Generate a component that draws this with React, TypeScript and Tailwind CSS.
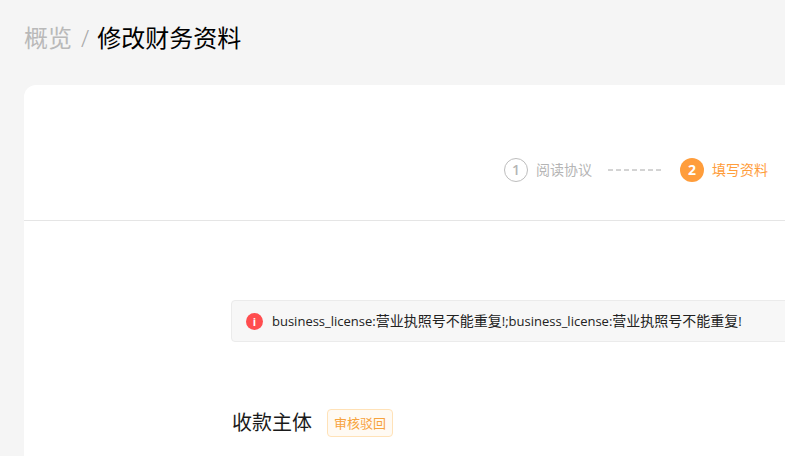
import React from "react"

const cjk = "font-['Open_Sans','Noto_Sans_CJK_SC',sans-serif]"

function ErrorText() {
  return (
    <>
      <span className="text-[13px]">business_license:</span>
      <span className="text-sm">营业执照号不能重复</span>
      <span className="text-[13px]">!</span>
    </>
  )
}

export default function App() {
  return (
    <div className={`h-screen w-full overflow-hidden bg-[#f5f5f5] pl-6 pt-[21px] ${cjk}`}>
      {/* Breadcrumb */}
      <div className="flex h-[34px] items-center text-2xl leading-[34px]">
        <span className="text-[#b9b9b9]">概览</span>
        <span className="ml-[9px] mr-2 font-light text-[#a8a8a8]">/</span>
        <span className="text-black">修改财务资料</span>
      </div>

      {/* Card */}
      <div className="mt-[30px] min-h-[400px] w-[1100px] rounded-t-xl bg-white">
        {/* Steps */}
        <div className="flex h-[136px] items-end border-b border-[#e5e5e5] pb-[38px] pl-[480px]">
          <div className="flex items-center">
            <span className="flex h-6 w-6 items-center justify-center rounded-full border border-[#bdbdbd] text-sm font-semibold text-[#b5b5b5]">1</span>
            <span className="ml-2 text-sm text-[#b5b5b5]">阅读协议</span>
            <svg className="ml-4 mr-[18px]" width="54" height="2" viewBox="0 0 54 2">
              <line x1="0" y1="1" x2="54" y2="1" stroke="#a8a8a8" strokeWidth="1" strokeDasharray="5 3" />
            </svg>
            <span className="flex h-6 w-6 items-center justify-center rounded-full bg-[#ff9d3b] text-sm font-bold text-white">2</span>
            <span className="ml-2 text-sm text-[#ff9d3b]">填写资料</span>
          </div>
        </div>

        <div className="pl-[207px]">
          {/* Error alert */}
          <div className="mt-[79px] flex h-[42px] items-center rounded border border-[#ebebeb] bg-[#f7f7f7] pl-[14px] text-[#222]">
            <span className="flex h-[17px] w-[17px] items-center justify-center rounded-full bg-[#ff4d4f] text-[11px] font-bold leading-none text-white">i</span>
            <span className="ml-[9px] flex items-baseline">
              <ErrorText />
              <span className="text-[13px]">;</span>
              <ErrorText />
            </span>
          </div>

          {/* Section title */}
          <div className="ml-px mt-[67px] flex items-center">
            <h2 className="text-xl font-normal text-[#1a1a1a]">收款主体</h2>
            <span className="ml-[15px] rounded border border-[#ffe2b8] bg-[#fffaf3] px-[6px] py-[3px] text-[13px] leading-[20px] text-[#f7a23c]">审核驳回</span>
          </div>
        </div>
      </div>
    </div>
  )
}
